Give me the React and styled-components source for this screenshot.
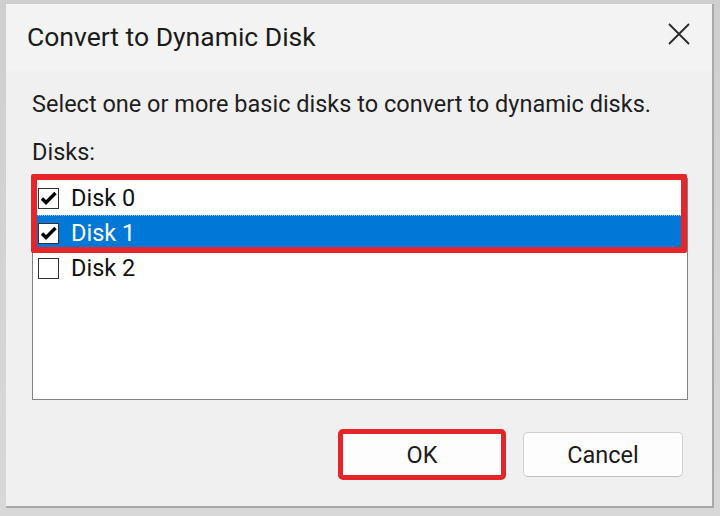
import React from 'react';
import styled, { createGlobalStyle } from 'styled-components';

const GlobalStyle = createGlobalStyle`
  html, body {
    margin: 0;
    padding: 0;
    background: #dcdcdc;
  }
  body {
    font-family: Roboto, "Noto Sans", sans-serif;
    color: #1a1a1a;
  }
`;

const Page = styled.div`
  width: 720px;
  height: 516px;
  padding: 4px 0 0 6px;
  box-sizing: border-box;
  background: linear-gradient(#cfcfcf, #d8d8d8);
`;

const Dialog = styled.div`
  width: 708px;
  height: 504px;
  box-sizing: border-box;
  border-right: 2px solid #a9a9a9;
  border-bottom: 2px solid #a9a9a9;
  background: #f0f0f0;
  display: flex;
  flex-direction: column;
`;

const TitleBar = styled.div`
  height: 66px;
  flex: none;
  display: flex;
  align-items: center;
  justify-content: space-between;
  padding: 0 20px 0 21px;
  background: #f3f3f3;
`;

const Title = styled.div`
  font-size: 26.5px;
  color: #1b1b1b;
  margin-top: -2px;
`;

const CloseButton = styled.div`
  width: 26px;
  height: 26px;
  display: flex;
  align-items: center;
  justify-content: center;
  margin-top: -6px;
`;

const Body = styled.div`
  flex: 1;
  display: flex;
  flex-direction: column;
  padding: 20px 24px 0 26px;
`;

const Label = styled.div`
  font-size: 23.5px;
  line-height: 28px;
  height: 28px;
  margin-top: ${(p) => p.$gap || 0}px;
  color: #1e1e1e;
`;

const ListWrap = styled.div`
  position: relative;
  margin-top: 12px;
`;

const ListBox = styled.div`
  height: 222px;
  box-sizing: border-box;
  background: #fff;
  border: 1px solid #828282;
  padding-top: 1px;
`;

const Row = styled.div`
  height: 35px;
  display: flex;
  align-items: center;
  gap: 12px;
  padding-left: 5px;
  font-size: 23.5px;
  box-sizing: border-box;
  background: ${(p) => (p.$selected ? '#0078d7' : 'transparent')};
  color: ${(p) => (p.$selected ? '#ffffff' : '#111')};
  border-top: 1px dotted ${(p) => (p.$selected ? '#9fc6ea' : 'transparent')};
`;

const Check = styled.div`
  width: 21px;
  height: 21px;
  box-sizing: border-box;
  border: 1px solid #333;
  background: #fff;
  display: flex;
  align-items: center;
  justify-content: center;
  flex: none;
`;

const Highlight = styled.div`
  position: absolute;
  left: -1px;
  top: -4px;
  width: 656px;
  height: 79px;
  box-sizing: border-box;
  border: 6px solid #e5252a;
  border-radius: 2px;
  pointer-events: none;
`;

const ButtonRow = styled.div`
  display: flex;
  justify-content: flex-end;
  gap: 20px;
  margin-top: 32px;
  padding-right: 5px;
`;

const ButtonFrame = styled.div`
  position: relative;
`;

const Button = styled.div`
  width: ${(p) => p.$w}px;
  height: 45px;
  box-sizing: border-box;
  background: #fdfdfd;
  border: 1px solid #d0d0d0;
  border-bottom-color: #bcbcbc;
  border-radius: 5px;
  display: flex;
  align-items: center;
  justify-content: center;
  font-size: 23.5px;
  color: #1b1b1b;
`;

const ButtonMark = styled.div`
  position: absolute;
  inset: -3px -3px -3px -3px;
  border: 5px solid #e5252a;
  border-radius: 5px;
  pointer-events: none;
`;

const CheckIcon = () => (
  <svg width="17" height="15" viewBox="0 0 17 15">
    <path d="M2 7.5 L6 11.5 L15.5 2" fill="none" stroke="#000" strokeWidth="3.4" />
  </svg>
);

const CloseIcon = () => (
  <svg width="22" height="22" viewBox="0 0 22 22">
    <path d="M1 1 L21 21 M21 1 L1 21" stroke="#2a2a2a" strokeWidth="1.8" />
  </svg>
);

const disks = [
  { name: 'Disk 0', checked: true },
  { name: 'Disk 1', checked: true, selected: true },
  { name: 'Disk 2', checked: false },
];

export default function App() {
  return (
    <>
      <GlobalStyle />
      <Page>
        <Dialog>
          <TitleBar>
            <Title>Convert to Dynamic Disk</Title>
            <CloseButton>
              <CloseIcon />
            </CloseButton>
          </TitleBar>
          <Body>
            <Label>Select one or more basic disks to convert to dynamic disks.</Label>
            <Label $gap={20}>Disks:</Label>
            <ListWrap>
              <ListBox>
                {disks.map((d) => (
                  <Row key={d.name} $selected={d.selected}>
                    <Check>{d.checked && <CheckIcon />}</Check>
                    {d.name}
                  </Row>
                ))}
              </ListBox>
              <Highlight />
            </ListWrap>
            <ButtonRow>
              <ButtonFrame>
                <Button $w={162}>OK</Button>
                <ButtonMark />
              </ButtonFrame>
              <Button $w={160}>Cancel</Button>
            </ButtonRow>
          </Body>
        </Dialog>
      </Page>
    </>
  );
}
